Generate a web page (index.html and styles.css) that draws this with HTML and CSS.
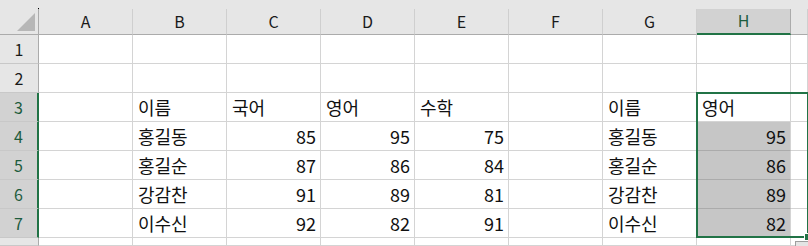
FILE: index.html
```html
<!DOCTYPE html>
<html>
<head>
    <title>Sheet1</title>
    <link rel="stylesheet" href="styles.css">
</head>
<body>
    <div class="sheet">
        <!-- column headers -->
        <div class="row">
            <div class="corner"><span class="corner-mark"></span></div>
            <div class="col-head">A</div>
            <div class="col-head">B</div>
            <div class="col-head">C</div>
            <div class="col-head">D</div>
            <div class="col-head">E</div>
            <div class="col-head">F</div>
            <div class="col-head">G</div>
            <div class="col-head active">H</div>
            <div class="col-head"></div>
        </div>

        <div class="row">
            <div class="row-head">1</div>
            <div class="cell"></div><div class="cell"></div><div class="cell"></div><div class="cell"></div>
            <div class="cell"></div><div class="cell"></div><div class="cell"></div><div class="cell"></div>
            <div class="cell"></div>
        </div>
        <div class="row">
            <div class="row-head">2</div>
            <div class="cell"></div><div class="cell"></div><div class="cell"></div><div class="cell"></div>
            <div class="cell"></div><div class="cell"></div><div class="cell"></div><div class="cell"></div>
            <div class="cell"></div>
        </div>
        <div class="row">
            <div class="row-head active">3</div>
            <div class="cell"></div>
            <div class="cell">이름</div>
            <div class="cell">국어</div>
            <div class="cell">영어</div>
            <div class="cell">수학</div>
            <div class="cell"></div>
            <div class="cell">이름</div>
            <div class="cell">영어</div>
            <div class="cell"></div>
        </div>
        <div class="row">
            <div class="row-head active">4</div>
            <div class="cell"></div>
            <div class="cell">홍길동</div>
            <div class="cell num">85</div>
            <div class="cell num">95</div>
            <div class="cell num">75</div>
            <div class="cell"></div>
            <div class="cell">홍길동</div>
            <div class="cell num sel">95</div>
            <div class="cell"></div>
        </div>
        <div class="row">
            <div class="row-head active">5</div>
            <div class="cell"></div>
            <div class="cell">홍길순</div>
            <div class="cell num">87</div>
            <div class="cell num">86</div>
            <div class="cell num">84</div>
            <div class="cell"></div>
            <div class="cell">홍길순</div>
            <div class="cell num sel">86</div>
            <div class="cell"></div>
        </div>
        <div class="row">
            <div class="row-head active">6</div>
            <div class="cell"></div>
            <div class="cell">강감찬</div>
            <div class="cell num">91</div>
            <div class="cell num">89</div>
            <div class="cell num">81</div>
            <div class="cell"></div>
            <div class="cell">강감찬</div>
            <div class="cell num sel">89</div>
            <div class="cell"></div>
        </div>
        <div class="row">
            <div class="row-head active">7</div>
            <div class="cell"></div>
            <div class="cell">이수신</div>
            <div class="cell num">92</div>
            <div class="cell num">82</div>
            <div class="cell num">91</div>
            <div class="cell"></div>
            <div class="cell">이수신</div>
            <div class="cell num sel">82</div>
            <div class="cell"></div>
        </div>
        <!-- row 8 is only partly scrolled into view -->
        <div class="row">
            <div class="row-head"></div>
            <div class="cell"></div><div class="cell"></div><div class="cell"></div><div class="cell"></div>
            <div class="cell"></div><div class="cell"></div><div class="cell"></div><div class="cell"></div>
            <div class="cell"><span class="quick"></span></div>
        </div>

        <!-- selected range H3:H7, drawn over the cells -->
        <div class="selection"><span class="fill-handle"></span></div>
    </div>
</body>
</html>
```

FILE: styles.css
```css
body {
    margin: 0;
    overflow: hidden;
    font-family: "Noto Sans CJK KR", "Noto Sans", sans-serif;
    color: #111;
}

.sheet {
    position: relative;
    display: grid;
    grid-template-columns: 39px repeat(8, 94px) 1fr;
    grid-template-rows: 35px repeat(7, 29px) 1fr;
    width: 808px;
    height: 246px;
    overflow: hidden;
    background-color: #e6e6e6;
}

.row {
    display: contents;
}

.corner,
.col-head {
    margin-top: 9px;
    box-sizing: border-box;
    border-bottom: 1px solid #ababab;
}

.corner {
    position: relative;
    border-right: 1px solid #ababab;
}

.corner::before {
    content: "";
    position: absolute;
    top: -1px;
    right: -1px;
    width: 1px;
    height: 1px;
    background-color: #000;
}

.corner-mark {
    position: absolute;
    right: 3px;
    bottom: 3px;
    width: 0;
    height: 0;
    border-left: 18px solid transparent;
    border-bottom: 18px solid #b7b7b7;
}

.col-head {
    border-right: 1px solid #cfcfcf;
    display: flex;
    align-items: center;
    justify-content: center;
    font-size: 16px;
    color: #1a1a1a;
    padding-bottom: 2px;
}

.col-head.active {
    background-color: #d2d2d2;
    border-bottom: 2px solid #217346;
    border-right-color: #ababab;
    color: #1d5c3d;
}

.row-head {
    box-sizing: border-box;
    border-right: 1px solid #ababab;
    border-bottom: 1px solid #c8c8c8;
    display: flex;
    align-items: center;
    justify-content: center;
    font-size: 16px;
    color: #1a1a1a;
}

.row-head.active {
    background-color: #d2d2d2;
    border-right: 2px solid #217346;
    color: #1d5c3d;
}

.cell {
    box-sizing: border-box;
    background-color: #fff;
    border-right: 1px solid #d4d4d4;
    border-bottom: 1px solid #d4d4d4;
    padding: 0 5px;
    display: flex;
    align-items: center;
    font-size: 18px;
    line-height: 1;
    white-space: nowrap;
    position: relative;
}

.num {
    justify-content: flex-end;
    padding-right: 4px;
}

.sel {
    background-color: #c6c6c6;
    border-bottom-color: #ababab;
}

.quick {
    position: absolute;
    left: 4px;
    top: 3px;
    width: 16px;
    height: 10px;
    box-sizing: border-box;
    border: 1px solid #9e9e9e;
    background-color: #e4e4e4;
}

.selection {
    position: absolute;
    grid-column: 9;
    grid-row: 4 / 9;
    top: -1px;
    left: -1px;
    right: -1px;
    bottom: 0;
    border: 2px solid #217346;
    pointer-events: none;
}

.fill-handle {
    position: absolute;
    right: -5px;
    bottom: -5px;
    width: 6px;
    height: 6px;
    background-color: #217346;
    border: 1px solid #fff;
}
```
